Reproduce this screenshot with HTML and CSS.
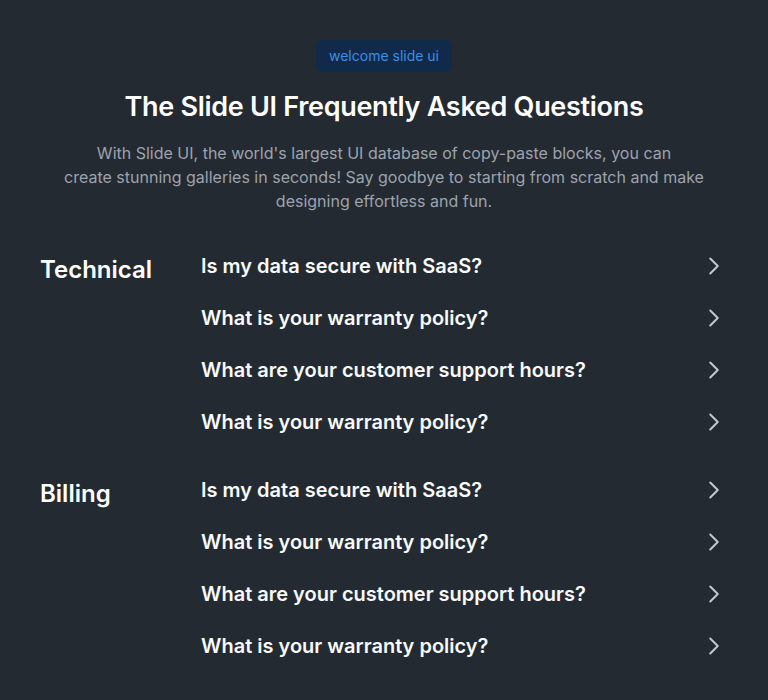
FILE: index.html
```html
<!DOCTYPE html>
<html lang="en">
<head>
<meta charset="utf-8">
<title>FAQ</title>
<link rel="stylesheet" href="styles.css">
</head>
<body>
<main class="faq">
  <header class="intro">
    <span class="badge">welcome slide ui</span>
    <h1 class="title">The Slide UI Frequently Asked Questions</h1>
    <p class="lead">With Slide UI, the world's largest UI database of copy-paste blocks, you can<br>create stunning galleries in seconds! Say goodbye to starting from scratch and make designing effortless and fun.</p>
  </header>

  <section class="group">
    <h2 class="group-title">Technical</h2>
    <ul class="questions">
      <li class="q"><span>Is my data secure with SaaS?</span><svg class="chev" viewBox="0 0 24 24"><path d="m8.25 4.5 7.5 7.5-7.5 7.5"/></svg></li>
      <li class="q"><span>What is your warranty policy?</span><svg class="chev" viewBox="0 0 24 24"><path d="m8.25 4.5 7.5 7.5-7.5 7.5"/></svg></li>
      <li class="q"><span>What are your customer support hours?</span><svg class="chev" viewBox="0 0 24 24"><path d="m8.25 4.5 7.5 7.5-7.5 7.5"/></svg></li>
      <li class="q"><span>What is your warranty policy?</span><svg class="chev" viewBox="0 0 24 24"><path d="m8.25 4.5 7.5 7.5-7.5 7.5"/></svg></li>
    </ul>
  </section>

  <section class="group">
    <h2 class="group-title">Billing</h2>
    <ul class="questions">
      <li class="q"><span>Is my data secure with SaaS?</span><svg class="chev" viewBox="0 0 24 24"><path d="m8.25 4.5 7.5 7.5-7.5 7.5"/></svg></li>
      <li class="q"><span>What is your warranty policy?</span><svg class="chev" viewBox="0 0 24 24"><path d="m8.25 4.5 7.5 7.5-7.5 7.5"/></svg></li>
      <li class="q"><span>What are your customer support hours?</span><svg class="chev" viewBox="0 0 24 24"><path d="m8.25 4.5 7.5 7.5-7.5 7.5"/></svg></li>
      <li class="q"><span>What is your warranty policy?</span><svg class="chev" viewBox="0 0 24 24"><path d="m8.25 4.5 7.5 7.5-7.5 7.5"/></svg></li>
    </ul>
  </section>
</main>
</body>
</html>
```

FILE: styles.css
```css
* { box-sizing: border-box; }
html, body {
  margin: 0;
  padding: 0;
  background: #242a31;
}
body {
  font-family: Inter, "Noto Sans", sans-serif;
  color: #f3f4f6;
  min-height: 700px;
}
.faq {
  padding: 40px 40px 24px;
}
.intro {
  display: flex;
  flex-direction: column;
  align-items: center;
  text-align: center;
}
.badge {
  display: inline-block;
  background: #11294a;
  color: #3b8fe6;
  font-size: 14px;
  line-height: 20px;
  padding: 6px 13px;
  border-radius: 6px;
}
.title {
  margin: 17px 0 0;
  font-size: 27px;
  line-height: 36px;
  font-weight: 600;
  color: #ffffff;
  letter-spacing: -0.3px;
}
.lead {
  margin: 16px 0 0;
  max-width: 660px;
  font-size: 16px;
  line-height: 24px;
  color: #9ca3af;
}
.group {
  display: grid;
  grid-template-columns: 161px 1fr;
  margin-top: 27px;
}
.group + .group {
  margin-top: 16px;
}
.group-title {
  margin: 0;
  padding-top: 14px;
  font-size: 24px;
  line-height: 32px;
  font-weight: 600;
  color: #ffffff;
}
.questions {
  list-style: none;
  margin: 0;
  padding: 0;
}
.q {
  display: flex;
  align-items: center;
  justify-content: space-between;
  padding: 12px 0;
  font-size: 20px;
  line-height: 28px;
  font-weight: 600;
  color: #f9fafb;
}
.chev {
  width: 24px;
  height: 24px;
  margin-right: 2px;
  fill: none;
  stroke: #c4c8cf;
  stroke-width: 2;
  stroke-linecap: round;
  stroke-linejoin: round;
}
```
